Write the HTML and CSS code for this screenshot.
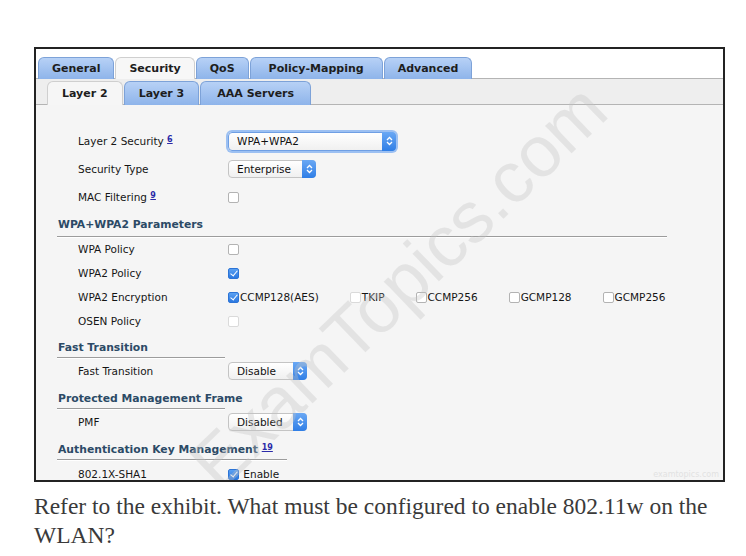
FILE: index.html
```html
<!DOCTYPE html>
<html lang="en">
<head>
  <meta charset="UTF-8" />
  <title>WLAN - Security</title>
  <link rel="stylesheet" href="styles.css">
</head>
<body>
  <div class="exhibit">
    <div class="tabs tabs-main">
      <span class="tab">General</span>
      <span class="tab active">Security</span>
      <span class="tab">QoS</span>
      <span class="tab wide-tab">Policy-Mapping</span>
      <span class="tab">Advanced</span>
    </div>
    <div class="tabs tabs-sub">
      <span class="tab active">Layer 2</span>
      <span class="tab">Layer 3</span>
      <span class="tab">AAA Servers</span>
    </div>

    <div class="panel">
      <div class="row tall">
        <span class="label">Layer 2 Security <a class="note">6</a></span>
        <div class="select wide focus">WPA+WPA2
          <span class="arrow"><svg width="7" height="10" viewBox="0 0 7 10"><path d="M1 4 L3.5 1.5 L6 4 M1 6 L3.5 8.5 L6 6" /></svg></span>
        </div>
      </div>
      <div class="row tall">
        <span class="label">Security Type</span>
        <div class="select short">Enterprise
          <span class="arrow"><svg width="7" height="10" viewBox="0 0 7 10"><path d="M1 4 L3.5 1.5 L6 4 M1 6 L3.5 8.5 L6 6" /></svg></span>
        </div>
      </div>
      <div class="row tall">
        <span class="label">MAC Filtering <a class="note">9</a></span>
        <span class="cb"></span>
      </div>

      <div class="section wide-line first">WPA+WPA2 Parameters</div>
      <div class="row">
        <span class="label">WPA Policy</span>
        <span class="cb"></span>
      </div>
      <div class="row">
        <span class="label">WPA2 Policy</span>
        <span class="cb on"></span>
      </div>
      <div class="row">
        <span class="label">WPA2 Encryption</span>
        <div class="options">
          <span class="opt"><span class="cb on"></span>CCMP128(AES)</span>
          <span class="opt"><span class="cb faint"></span>TKIP</span>
          <span class="opt"><span class="cb"></span>CCMP256</span>
          <span class="opt"><span class="cb"></span>GCMP128</span>
          <span class="opt"><span class="cb"></span>GCMP256</span>
        </div>
      </div>
      <div class="row">
        <span class="label">OSEN Policy</span>
        <span class="cb faint"></span>
      </div>

      <div class="section">Fast Transition</div>
      <div class="row mid">
        <span class="label">Fast Transition</span>
        <div class="select small">Disable
          <span class="arrow"><svg width="7" height="10" viewBox="0 0 7 10"><path d="M1 4 L3.5 1.5 L6 4 M1 6 L3.5 8.5 L6 6" /></svg></span>
        </div>
      </div>

      <div class="section">Protected Management Frame</div>
      <div class="row mid">
        <span class="label">PMF</span>
        <div class="select small">Disabled
          <span class="arrow"><svg width="7" height="10" viewBox="0 0 7 10"><path d="M1 4 L3.5 1.5 L6 4 M1 6 L3.5 8.5 L6 6" /></svg></span>
        </div>
      </div>

      <div class="section akm">Authentication Key Management <a class="note">19</a></div>
      <div class="row tall">
        <span class="label">802.1X-SHA1</span>
        <span class="opt"><span class="cb on"></span>&nbsp;Enable</span>
      </div>
    </div>

    <div class="watermark">ExamTopics.com</div>
    <div class="corner-mark">examtopics.com</div>
  </div>

  <p class="question">Refer to the exhibit. What must be configured to enable 802.11w on the WLAN?</p>
</body>
</html>
```

FILE: styles.css
```css
* {
  margin: 0;
  padding: 0;
  box-sizing: border-box;
}
body {
  background-color: #fff;
  font-family: 'DejaVu Sans', Verdana, sans-serif;
}

/* framed window */
.exhibit {
  position: relative;
  width: 691px;
  height: 435px;
  margin: 47px 0 0 34px;
  border: 2px solid #232323;
  background-color: #f5f5f5;
  overflow: hidden;
}

/* tab strips */
.tabs {
  display: flex;
  gap: 1px;
  border-bottom: 1px solid #b4b4b4;
}
.tabs-main {
  background-color: #fff;
  padding: 8px 0 0 2px;
}
.tabs-sub {
  background-color: #eeeeee;
  padding: 2px 0 0 11px;
}
.tab {
  display: flex;
  align-items: center;
  padding: 0 14px;
  font-size: 11px;
  font-weight: bold;
  color: #1d1d1d;
  background: linear-gradient(#b7d1f6, #8eb4ea);
  border: 1px solid #7da2d8;
  border-bottom: none;
  border-radius: 6px 6px 0 0;
  margin-bottom: -1px;
}
.tabs-main .tab {
  height: 22px;
  padding: 0 13px;
}
.tabs-main .tab.wide-tab {
  padding: 0 18px;
}
.tabs-sub .tab {
  height: 24px;
}
.tabs-sub .tab:last-child {
  padding: 0 16px;
}
.tab.active {
  background: #f7f7f7;
  border-color: #cfcfcf;
}
.tabs-sub .tab.active {
  background: #f6f6f6;
}

/* form */
.panel {
  padding: 22px 0 0 21px;
  font-size: 10.5px;
  color: #151515;
}
.row {
  display: flex;
  align-items: center;
  height: 24px;
  padding-left: 21px;
}
.row.tall {
  height: 28px;
}
.row.mid {
  height: 26px;
}
.label {
  width: 150px;
  flex-shrink: 0;
}
.note {
  position: relative;
  top: -3px;
  font-size: 8px;
  font-weight: bold;
  color: #2a2aa8;
  text-decoration: underline;
}
.section {
  width: 168px;
  height: 25px;
  padding: 5px 0 0 1px;
  line-height: 20px;
  font-size: 10.8px;
  font-weight: bold;
  color: #2c4a66;
  white-space: nowrap;
  border-bottom: 1px solid #9c9c9c;
  box-shadow: 0 1px 0 #fff;
}
.section.first {
  height: 26px;
  padding-top: 4px;
}
.section.wide-line {
  width: 610px;
}
.section.akm {
  width: 230px;
}

/* select boxes */
.select {
  position: relative;
  display: flex;
  align-items: center;
  height: 18px;
  padding-left: 8px;
  background: linear-gradient(#ffffff, #f0f0f0);
  border: 1px solid #c4c4c4;
  border-radius: 4px;
  color: #111;
}
.select.wide {
  width: 168px;
  height: 19px;
}
.select.short {
  width: 88px;
}
.select.small {
  width: 79px;
}
.select.focus {
  box-shadow: 0 0 0 2px #9cc0f2;
  border-color: #6f9fe4;
}
.arrow {
  position: absolute;
  right: -1px;
  top: -1px;
  bottom: -1px;
  width: 14px;
  display: flex;
  align-items: center;
  justify-content: center;
  background: linear-gradient(#6aa8f4, #2f7ee6);
  border-radius: 0 4px 4px 0;
}
.arrow path {
  fill: none;
  stroke: #fff;
  stroke-width: 1.3;
}

/* checkboxes */
.cb {
  display: inline-block;
  position: relative;
  width: 11px;
  height: 11px;
  border: 1px solid #b3b3b3;
  border-radius: 2px;
  background: #fff;
  flex-shrink: 0;
}
.cb.faint {
  border-color: #dadada;
}
.cb.on {
  background: linear-gradient(#5aa0f2, #2b78e0);
  border-color: #2c74d6;
}
.cb.on::after {
  content: "";
  position: absolute;
  left: 3px;
  top: 0px;
  width: 3px;
  height: 6px;
  border: solid #fff;
  border-width: 0 1.5px 1.5px 0;
  transform: rotate(40deg);
}
.options {
  display: flex;
  gap: 31px;
}
.opt {
  display: flex;
  align-items: center;
  gap: 1px;
}

/* watermarks */
.watermark {
  position: absolute;
  left: 362px;
  top: 237px;
  transform: translate(-50%, -50%) rotate(-44deg);
  font-family: 'Liberation Sans', Arial, sans-serif;
  font-size: 72px;
  color: rgba(195, 195, 195, 0.35);
  white-space: nowrap;
  pointer-events: none;
}
.corner-mark {
  position: absolute;
  right: 4px;
  bottom: 1px;
  font-size: 8px;
  color: #e2e2e2;
}

/* question text */
.question {
  width: 690px;
  margin: 10px 0 0 34px;
  font-family: 'Liberation Serif', 'Times New Roman', serif;
  font-size: 23.5px;
  line-height: 29px;
  color: #3a3a3a;
}
```
